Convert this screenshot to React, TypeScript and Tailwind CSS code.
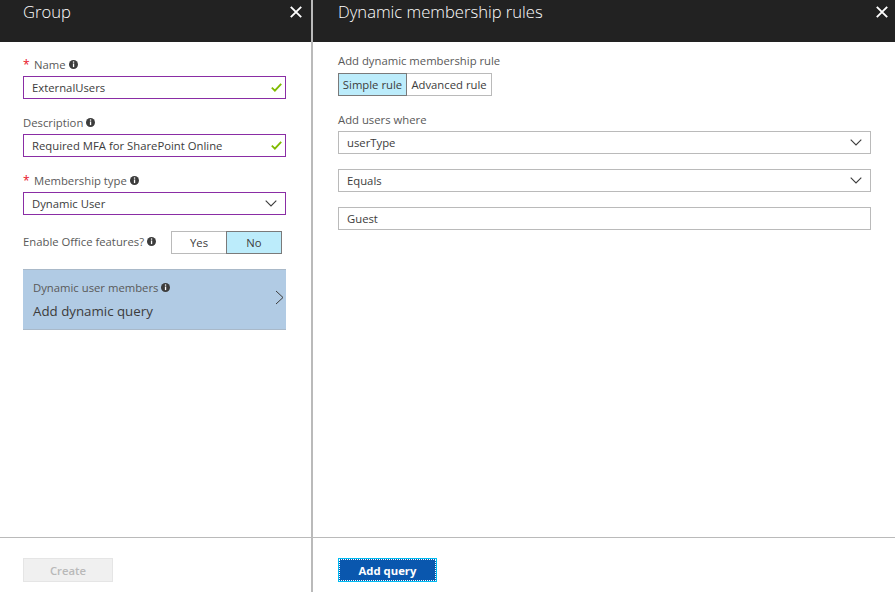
import React from "react";

const font = { fontFamily: '"Open Sans", "Noto Sans", sans-serif' };

function Info() {
  return (
    <svg width="9" height="9" viewBox="0 0 9 9" className="ml-[3px] shrink-0">
      <circle cx="4.5" cy="4.5" r="4.5" fill="#3c3c3c" />
      <rect x="3.9" y="1.4" width="1.3" height="1.3" fill="#fff" />
      <rect x="3.9" y="3.5" width="1.3" height="3.6" fill="#fff" />
    </svg>
  );
}

function Check() {
  return (
    <svg width="11" height="9" viewBox="0 0 11 9" className="shrink-0">
      <path d="M0.8 4.6 L3.9 7.7 L10.2 0.8" fill="none" stroke="#7fba00" strokeWidth="1.8" />
    </svg>
  );
}

function Chevron() {
  return (
    <svg width="12" height="7" viewBox="0 0 12 7" className="shrink-0">
      <path d="M0.7 0.7 L6 6 L11.3 0.7" fill="none" stroke="#3c3c3c" strokeWidth="1.1" />
    </svg>
  );
}

function Close() {
  return (
    <svg width="12" height="12" viewBox="0 0 12 12">
      <path d="M0.8 0.8 L11.2 11.2 M11.2 0.8 L0.8 11.2" stroke="#fff" strokeWidth="1.9" />
    </svg>
  );
}

function Label({ text, star, info = true }: { text: string; star?: boolean; info?: boolean }) {
  return (
    <div className="flex items-center h-[15px] text-[11.3px] leading-[15px] text-[#595959]">
      {star && <span className="text-[#e81123] w-[11px] text-[12px]">*</span>}
      <span>{text}</span>
      {info && <Info />}
    </div>
  );
}

function PurpleField({ text, icon }: { text: string; icon: React.ReactNode }) {
  return (
    <div className="flex items-center justify-between h-[23px] border border-[#8a2da5] pl-[8px] pr-[3px] text-[11.3px] text-[#3c3c3c]">
      <span className="pt-[2px]">{text}</span>
      {icon}
    </div>
  );
}

function GrayField({ text, chevron }: { text: string; chevron?: boolean }) {
  return (
    <div className="flex items-center justify-between h-[23px] border border-[#bababa] pl-[8px] pr-[8px] text-[11.3px] text-[#3c3c3c]">
      <span className="pt-[2px]">{text}</span>
      {chevron && <Chevron />}
    </div>
  );
}

function Header({ title, pad }: { title: string; pad: string }) {
  return (
    <div className={`h-[42px] shrink-0 bg-[#222222] flex items-start justify-between ${pad}`}>
      <span className="text-[16.6px] leading-[24px] font-light text-[#ffffff]">{title}</span>
      <span className="mt-[6px]"><Close /></span>
    </div>
  );
}

export default function App() {
  return (
    <div className="flex w-[895px] h-[592px] bg-white overflow-hidden" style={font}>
      <div className="w-[311px] shrink-0 flex flex-col">
        <Header title="Group" pad="pl-[23px] pr-[9px]" />
        <div className="flex-1 pl-[23px] pr-[25px] pt-[15px]">
          <Label text="Name" star />
          <div className="mt-[4px]"><PurpleField text="ExternalUsers" icon={<Check />} /></div>
          <div className="mt-[16px]"><Label text="Description" /></div>
          <div className="mt-[4px]"><PurpleField text="Required MFA for SharePoint Online" icon={<Check />} /></div>
          <div className="mt-[16px]"><Label text="Membership type" star /></div>
          <div className="mt-[4px]">
            <div className="flex items-center justify-between h-[23px] border border-[#8a2da5] pl-[8px] pr-[8px] text-[11.3px] text-[#3c3c3c]">
              <span className="pt-[2px]">Dynamic User</span>
              <Chevron />
            </div>
          </div>
          <div className="mt-[16px] flex items-center justify-between pr-[4px]">
            <div className="mb-[2px]"><Label text="Enable Office features?" /></div>
            <div className="flex h-[23px] w-[111px] text-[11.3px] text-[#3c3c3c]">
              <div className="w-[55px] pt-[2px] flex items-center justify-center border border-r-0 border-[#bababa]">Yes</div>
              <div className="flex-1 pt-[2px] flex items-center justify-center border border-[#7a7a7a] bg-[#bcecfb]">No</div>
            </div>
          </div>
          <div className="mt-[15px] h-[61px] bg-[#b1cbe4] border-t border-b border-[#a9b9c9] pl-[10px] pr-[2px] flex items-center justify-between">
            <div>
              <Label text="Dynamic user members" />
              <div className="mt-[7px] text-[13.3px] leading-[18px] text-[#3c3c3c]">Add dynamic query</div>
            </div>
            <svg width="9" height="15" viewBox="0 0 9 15" className="shrink-0 mb-[4px]">
              <path d="M1 1 L8 7.5 L1 14" fill="none" stroke="#3c3c3c" strokeWidth="1" />
            </svg>
          </div>
        </div>
        <div className="h-[55px] shrink-0 border-t border-[#bababa] pl-[23px] pt-[20px]">
          <div className="w-[90px] h-[24px] bg-[#f0f0f0] border border-[#e5e5e5] flex items-center justify-center pt-[2px] text-[11.3px] font-semibold text-[#b9b9b9]">
            Create
          </div>
        </div>
      </div>
      <div className="w-[2px] shrink-0 bg-[#bababa]" />
      <div className="flex-1 flex flex-col">
        <Header title="Dynamic membership rules" pad="pl-[25px] pr-[7px]" />
        <div className="flex-1 pl-[25px] pr-[24px] pt-[11px]">
          <Label text="Add dynamic membership rule" info={false} />
          <div className="mt-[5px] flex h-[23px] text-[11.3px] text-[#3c3c3c]">
            <div className="w-[69px] pt-[2px] flex items-center justify-center border border-[#7a7a7a] bg-[#bcecfb]">Simple rule</div>
            <div className="w-[85px] pt-[2px] flex items-center justify-center border border-l-0 border-[#bababa]">Advanced rule</div>
          </div>
          <div className="mt-[16px]"><Label text="Add users where" info={false} /></div>
          <div className="mt-[4px]"><GrayField text="userType" chevron /></div>
          <div className="mt-[15px]"><GrayField text="Equals" chevron /></div>
          <div className="mt-[15px]"><GrayField text="Guest" /></div>
        </div>
        <div className="h-[55px] shrink-0 border-t border-[#bababa] pl-[25px] pt-[20px]">
          <div className="w-[99px] h-[24px] bg-[#0a57ae] border border-[#00bcf2] outline-1 outline-dotted outline-white -outline-offset-2 flex items-center justify-center pt-[2px] text-[11.3px] font-bold text-white">
            Add query
          </div>
        </div>
      </div>
    </div>
  );
}
